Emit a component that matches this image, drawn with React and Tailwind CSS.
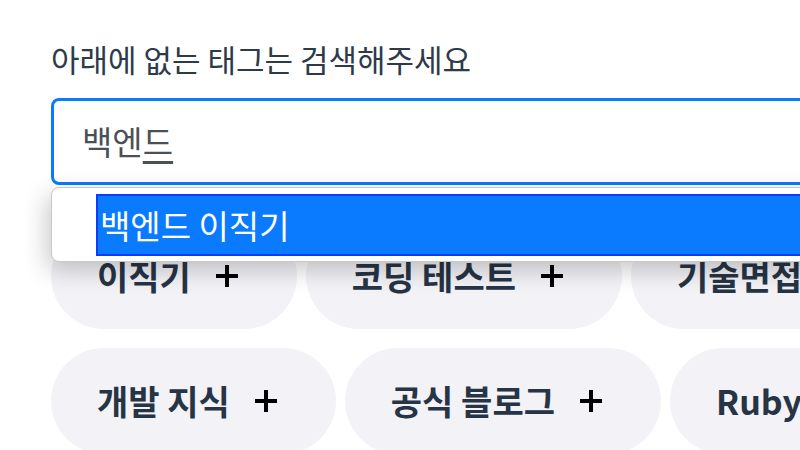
import React from "react";

const rows = [
  ["이직기", "코딩 테스트", "기술면접"],
  ["개발 지식", "공식 블로그", "Ruby"],
];

const Plus = () => (
  <svg width="22" height="22" viewBox="0 0 22 22" className="ml-[25px] shrink-0">
    <path d="M11 0v22M0 11h22" stroke="#000" strokeWidth="4" />
  </svg>
);

const Chip = ({ label }) => (
  <div className="flex h-[106px] shrink-0 items-center rounded-full bg-[#f2f2f7] pl-[46px] pr-[59px]">
    <span className="whitespace-nowrap text-[34px] font-bold leading-none text-[#263445]">
      {label}
    </span>
    <Plus />
  </div>
);

export default function App() {
  return (
    <div
      className="relative h-[450px] w-[800px] overflow-hidden bg-white"
      style={{ fontFamily: '"Noto Sans CJK KR", "Noto Sans", sans-serif' }}
    >
      <div className="pl-[51px] pt-[38px]">
        <p className="whitespace-nowrap text-[31px] leading-[42px] text-[#2d3a4a]">
          아래에 없는 태그는 검색해주세요
        </p>

        <div className="relative mt-[18px]">
          {/* search input, focused */}
          <div className="flex h-[87px] w-[800px] items-center rounded-[8px] border-[3px] border-[#0a7aff] bg-white pl-[28px]">
            <span className="text-[33px] leading-none text-[#4b5058]">
              백엔
              <span className="underline decoration-[3px] underline-offset-[6px]">드</span>
            </span>
          </div>

          {/* suggestion dropdown */}
          <div className="absolute left-0 top-[89px] z-10 h-[75px] w-[800px] rounded-[8px] border border-[#c8c8c8] bg-white pl-[44px] pt-[6px] shadow-[-4px_8px_24px_rgba(0,0,0,0.22)]">
            <div className="flex h-[62px] items-center border-2 border-[#0a3cff] bg-[#0a7aff] pl-[2px]">
              <span className="whitespace-nowrap text-[33px] leading-none text-white">
                백엔드 이직기
              </span>
            </div>
          </div>
        </div>

        {/* tag chips */}
        <div className="mt-[38px] flex flex-col gap-[19px]">
          {rows.map((row, i) => (
            <div key={i} className="flex gap-[9px]">
              {row.map((t) => (
                <Chip key={t} label={t} />
              ))}
            </div>
          ))}
        </div>
      </div>
    </div>
  );
}
